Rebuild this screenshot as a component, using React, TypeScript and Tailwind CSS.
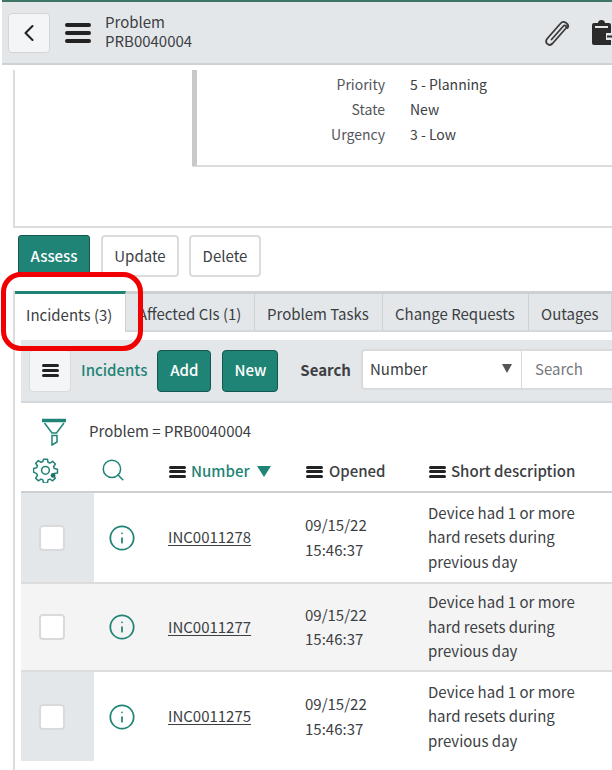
import { Search, Info, ChevronLeft } from 'lucide-react';

const rows = [
  { id: 'INC0011278', bg: 'bg-white', gutter: 'bg-[#e4e7ea]', h: 'h-[89px]' },
  { id: 'INC0011277', bg: 'bg-[#f4f4f4]', gutter: 'bg-[#f4f4f4]', h: 'h-[86px]' },
  { id: 'INC0011275', bg: 'bg-white', gutter: 'bg-[#e4e7ea]', h: 'h-[89px]' },
];

function Bars({ className, bar }: { className: string; bar: string }) {
  return (
    <div className={`flex flex-col justify-between ${className}`}>
      <span className={`${bar} bg-[#222] rounded-sm`} />
      <span className={`${bar} bg-[#222] rounded-sm`} />
      <span className={`${bar} bg-[#222] rounded-sm`} />
    </div>
  );
}

function Paperclip() {
  return (
    <svg width="28" height="28" viewBox="0 0 28 28" fill="none" stroke="#3a3a3a" strokeWidth="1.8" strokeLinecap="round" strokeLinejoin="round">
      <path d="M8.500 20.500 L20 7.500 C22 5.200 24.500 7.200 22.700 9.500 L9.500 24.500 C6 28 1 23.800 4.300 19.500 L17.500 4.500 C20.800 0.500 27 5.500 24.500 9" />
    </svg>
  );
}

function ClipboardIcon() {
  return (
    <svg width="22" height="25" viewBox="0 0 22 25" fill="#2b2b2b">
      <path d="M2 3h4V2.500a3 3 0 0 1 3-2.500h1a3 3 0 0 1 3 2.500V3h4a2 2 0 0 1 2 2v8h-5v7h5v5H2a2 2 0 0 1-2-2V5a2 2 0 0 1 2-2z" />
      <rect x="3" y="6" width="13" height="2" fill="#e4e7ea" />
      <rect x="15" y="15.500" width="7" height="2" />
    </svg>
  );
}

function Funnel() {
  return (
    <svg width="26" height="28" viewBox="0 0 26 28" fill="none" stroke="#1f8476" strokeWidth="1.5">
      <path d="M1 2.500h24" strokeWidth="3.500" />
      <path d="M3.500 5 L11 15 H15.500 L23 5" />
      <path d="M11 17.500h5v6.500l-5 3z" />
    </svg>
  );
}

function Gear() {
  return (
    <svg width="26" height="26" viewBox="0 0 24 24" fill="none" stroke="#1f8476" strokeWidth="1.4" strokeLinejoin="round">
      <path d="M9.700 2h3.600l.6 2.900 1.700.7 2.500-1.600 2.500 2.500-1.600 2.500.7 1.700 2.900.6v3.400l-2.900.6-.7 1.700 1.600 2.500-2.500 2.500-2.500-1.600-1.700.7-.6 2.900H9.700l-.6-2.900-1.700-.7-2.500 1.600-2.400-2.500 1.600-2.500-.7-1.700L.5 14v-3.400l2.900-.6.7-1.700L2.500 5.800l2.400-2.500 2.500 1.600 1.700-.7z" />
      <circle cx="11.500" cy="12.300" r="3.600" />
      <circle cx="18.500" cy="17" r="2.200" fill="#1f6f66" stroke="none" />
    </svg>
  );
}

function Incident({ id, bg, gutter, h }: (typeof rows)[number]) {
  return (
    <div className={`flex ${h} ${bg} text-[15px] leading-[24.500px] text-[#3c4043]`}>
      <div className={`w-[73px] shrink-0 ${gutter} flex items-center pl-[18px]`}>
        <span className="block w-[26px] h-[26px] bg-white border-2 border-[#d9dadb] rounded-[4px]" />
      </div>
      <div className="w-[74px] shrink-0 flex items-center pl-[14px]">
        <Info size={28} strokeWidth={1.5} className="text-[#1f8476]" />
      </div>
      <div className="w-[137px] shrink-0 flex items-center">
        <span className="underline underline-offset-2">{id}</span>
      </div>
      <div className="w-[123px] shrink-0 flex items-center">
        <div>
          09/15/22
          <br />
          15:46:37
        </div>
      </div>
      <div className="flex-1 flex items-center">
        <div>
          Device had 1 or more
          <br />
          hard resets during
          <br />
          previous day
        </div>
      </div>
    </div>
  );
}

const tabs = [
  { label: 'Affected CIs (1)', w: 'w-[129px]' },
  { label: 'Problem Tasks', w: 'w-[128px]' },
  { label: 'Change Requests', w: 'w-[146px]' },
  { label: 'Outages', w: 'w-[83px]' },
];

export default function App() {
  return (
    <div className="relative w-[612px] h-[770px] overflow-hidden bg-white font-['Noto_Sans_CJK_SC',sans-serif] text-[#3c4043]">
      {/* Header */}
      <header className="h-[65px] ml-[2px] border-t-[2px] border-t-[#3f7565] border-b-2 border-b-[#cfd2d5] bg-[#e4e7ea] flex items-center">
        <button className="ml-[6px] w-[42px] h-[40px] bg-[#f4f5f6] border border-[#d3d5d7] rounded-[4px] flex items-center justify-center">
          <ChevronLeft size={28} strokeWidth={1.8} className="text-[#222]" />
        </button>
        <Bars className="ml-[15px] w-[26px] h-[20px]" bar="h-[4px]" />
        <div className="ml-[14px] -mt-[3px] text-[15px] leading-[19px] text-[#3c4043]">
          <div>Problem</div>
          <div>PRB0040004</div>
        </div>
        <div className="ml-auto flex items-center gap-[21px]">
          <Paperclip />
          <div className="w-[20px] overflow-hidden">
            <ClipboardIcon />
          </div>
        </div>
      </header>

      {/* Form section */}
      <section className="h-[158px] mt-[5px] ml-[13px] border-l-2 border-b-2 border-[#dcdcdc] pl-[177px]">
        <div className="h-[97px] border-l-[5px] border-b-2 border-l-[#c9c9c9] border-b-[#dcdcdc] rounded-bl-[2px] flex flex-col pt-[2px] text-[14px] leading-[25px]">
          {[
            ['Priority', '5 - Planning'],
            ['State', 'New'],
            ['Urgency', '3 - Low'],
          ].map(([label, value]) => (
            <div key={label} className="flex">
              <span className="w-[188px] text-right text-[#52565a]">{label}</span>
              <span className="ml-[25px]">{value}</span>
            </div>
          ))}
        </div>
      </section>

      {/* Actions */}
      <div className="flex ml-[18px] mt-[7px] text-[15px]">
        <button className="w-[72px] h-[42px] bg-[#1f8476] border border-[#14574e] rounded-[3px] text-white font-medium">
          Assess
        </button>
        <button className="ml-[11px] w-[78px] h-[42px] bg-white border-2 border-[#dcdcdc] rounded-[4px]">Update</button>
        <button className="ml-[10px] w-[72px] h-[42px] bg-white border-2 border-[#dcdcdc] rounded-[4px]">Delete</button>
      </div>

      {/* Related lists */}
      <div className="mt-[14px] ml-[13px] h-[480px] border-l-2 border-[#dcdcdc]">
        <div className="flex h-[41px] text-[15px] border-t-[3px] border-[#cfd0d1]">
          <div className="relative w-[111px] shrink-0 pl-[11px] pt-[4px] -mt-[3px] border-t-[3px] border-t-[#1f8476] border-r border-r-[#cfd2d5] bg-white flex items-center">
            Incidents (3)
          </div>
          {tabs.map(tab => (
            <div
              key={tab.label}
              className={`${tab.w} shrink-0 pl-[12px] pt-[5px] bg-[#e4e7ea] border-r border-[#cfd2d5] border-b-2 border-b-[#d5d8db] flex items-center`}
            >
              {tab.label}
            </div>
          ))}
        </div>

        <div className="ml-[6px] mt-[8px]">
          {/* Toolbar */}
          <div className="h-[63px] bg-[#e4e7ea] border-b-2 border-[#d5d8db] flex items-center text-[15px]">
            <button className="ml-[8px] w-[42px] h-[42px] bg-[#f4f5f6] border border-[#d9dadb] rounded-[4px] flex items-center justify-center">
              <Bars className="w-[17px] h-[13px]" bar="h-[3px]" />
            </button>
            <span className="ml-[10px] text-[#1f8476] font-medium">Incidents</span>
            <button className="ml-[10px] w-[54px] h-[42px] bg-[#1f8476] border border-[#14574e] rounded-[4px] text-white font-medium">
              Add
            </button>
            <button className="ml-[11px] w-[56px] h-[42px] bg-[#1f8476] border border-[#14574e] rounded-[4px] text-white font-medium">
              New
            </button>
            <span className="ml-[22px] font-bold">Search</span>
            <div className="ml-[10px] w-[161px] h-[41px] bg-white border-2 border-r border-[#d9dadb] rounded-l-[4px] flex items-center pl-[7px] pr-[9px] -mt-[2px]">
              <span>Number</span>
              <span className="ml-auto -mt-[3px] w-0 h-0 border-x-[5px] border-x-transparent border-t-[9px] border-t-[#555]" />
            </div>
            <div className="flex-1 h-[41px] bg-white border-y-2 border-[#d9dadb] flex items-center pl-[13px] -mt-[2px] text-[#75797d]">
              Search
            </div>
          </div>

          {/* Breadcrumb */}
          <div className="h-[50px] flex items-center pl-[20px] pt-[8px] text-[15px]">
            <Funnel />
            <span className="ml-[22px] -mt-[2px]">Problem = PRB0040004</span>
          </div>

          {/* Column headers */}
          <div className="h-[40px] border-b-2 border-[#cdcfd1] flex items-center text-[15px] font-medium pb-[1px]">
            <div className="w-[73px] pl-[12px] -mt-[3px]">
              <Gear />
            </div>
            <div className="w-[75px] pl-[6px] -mt-[3px]">
              <Search size={26} strokeWidth={1.4} className="text-[#1f8476]" />
            </div>
            <div className="w-[137px] flex items-center">
              <Bars className="w-[17px] h-[12px] mr-[5px]" bar="h-[3px]" />
              <span className="text-[#1f8476]">Number</span>
              <span className="ml-[7px] w-0 h-0 border-x-[7px] border-x-transparent border-t-[11px] border-t-[#1f8476]" />
            </div>
            <div className="w-[123px] flex items-center">
              <Bars className="w-[17px] h-[12px] mr-[6px]" bar="h-[3px]" />
              <span>Opened</span>
            </div>
            <div className="flex items-center">
              <Bars className="w-[17px] h-[12px] mr-[5px]" bar="h-[3px]" />
              <span>Short description</span>
            </div>
          </div>

          {/* Rows */}
          <div className="flex flex-col">
            {rows.map(row => (
              <div key={row.id} className="border-b-2 border-[#dcdcdc] last:border-b-0">
                <Incident {...row} />
              </div>
            ))}
          </div>
        </div>
      </div>

      {/* Annotation over the first tab */}
      <div className="absolute left-[1px] top-[272px] w-[142px] h-[79px] border-[5px] border-[#f00000] rounded-[20px]" />
    </div>
  );
}
